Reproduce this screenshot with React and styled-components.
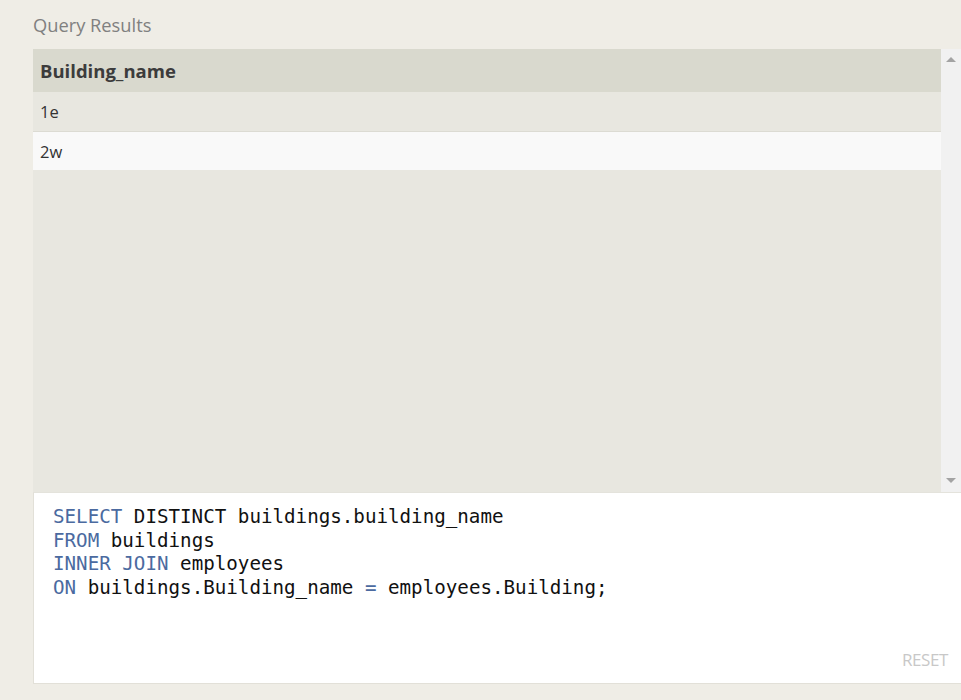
import React from 'react';
import styled, { createGlobalStyle } from 'styled-components';

const GlobalStyle = createGlobalStyle`
  html, body {
    margin: 0;
    padding: 0;
    background: #efede6;
    font-family: "Open Sans", "Noto Sans", sans-serif;
  }
`;

const Page = styled.div`
  width: 961px;
  height: 700px;
  padding-left: 33px;
  box-sizing: border-box;
  display: flex;
  flex-direction: column;
`;

const Title = styled.h2`
  margin: 0;
  height: 49px;
  line-height: 50px;
  font-size: 18.3px;
  font-weight: 400;
  color: #808080;
`;

const Results = styled.div`
  display: flex;
  height: 443px;
`;

const Table = styled.div`
  flex: 1;
  background: #e8e7e0;
  display: flex;
  flex-direction: column;
`;

const HeaderRow = styled.div`
  height: 43px;
  display: flex;
  align-items: center;
  padding-left: 7px;
  background: #d9d9ce;
  font-weight: 700;
  font-size: 18.5px;
  color: #3c3c3c;
`;

const Row = styled.div`
  height: ${(p) => (p.$first ? 40 : 38)}px;
  display: flex;
  align-items: center;
  padding-left: 7px;
  font-size: 16.5px;
  color: #333;
  background: ${(p) => (p.$odd ? '#e8e7e0' : '#f9f9f9')};
  border-bottom: ${(p) => (p.$first ? '1px solid #dcdbd3' : 'none')};
  box-sizing: border-box;
`;

const Scrollbar = styled.div`
  width: 20px;
  background: #f1f1f1;
  display: flex;
  flex-direction: column;
  justify-content: space-between;
  align-items: center;
  padding: 8px 0 9px;
`;

const Arrow = styled.div`
  width: 0;
  height: 0;
  border-left: 5px solid transparent;
  border-right: 5px solid transparent;
  ${(p) =>
    p.$up
      ? 'border-bottom: 5px solid #a3a3a3;'
      : 'border-top: 5px solid #a3a3a3;'}
`;

const Editor = styled.div`
  height: 192px;
  background: #fff;
  border: 1px solid #e2e0d8;
  border-top: 1px solid #e4e3dc;
  border-right: none;
  box-sizing: border-box;
  position: relative;
`;

const Code = styled.pre`
  margin: 0;
  padding: 12px 0 0 19px;
  font-family: "DejaVu Sans Mono", "Liberation Mono", monospace;
  font-size: 19.2px;
  line-height: 23.7px;
  color: #111;
`;

const Kw = styled.span`
  color: #4b6aa0;
`;

const Reset = styled.span`
  position: absolute;
  right: 13px;
  bottom: 12px;
  font-size: 17px;
  color: #c8c8c8;
  letter-spacing: -0.4px;
`;

const rows = ['1e', '2w'];

export default function App() {
  return (
    <Page>
      <GlobalStyle />
      <Title>Query Results</Title>
      <Results>
        <Table>
          <HeaderRow>Building_name</HeaderRow>
          {rows.map((r, i) => (
            <Row key={r} $odd={i % 2 === 0} $first={i === 0}>
              {r}
            </Row>
          ))}
        </Table>
        <Scrollbar>
          <Arrow $up />
          <Arrow />
        </Scrollbar>
      </Results>
      <Editor>
        <Code>
          <Kw>SELECT</Kw> DISTINCT buildings.building_name{'\n'}
          <Kw>FROM</Kw> buildings{'\n'}
          <Kw>INNER JOIN</Kw> employees{'\n'}
          <Kw>ON</Kw> buildings.Building_name <Kw>=</Kw> employees.Building;
        </Code>
        <Reset>RESET</Reset>
      </Editor>
    </Page>
  );
}
